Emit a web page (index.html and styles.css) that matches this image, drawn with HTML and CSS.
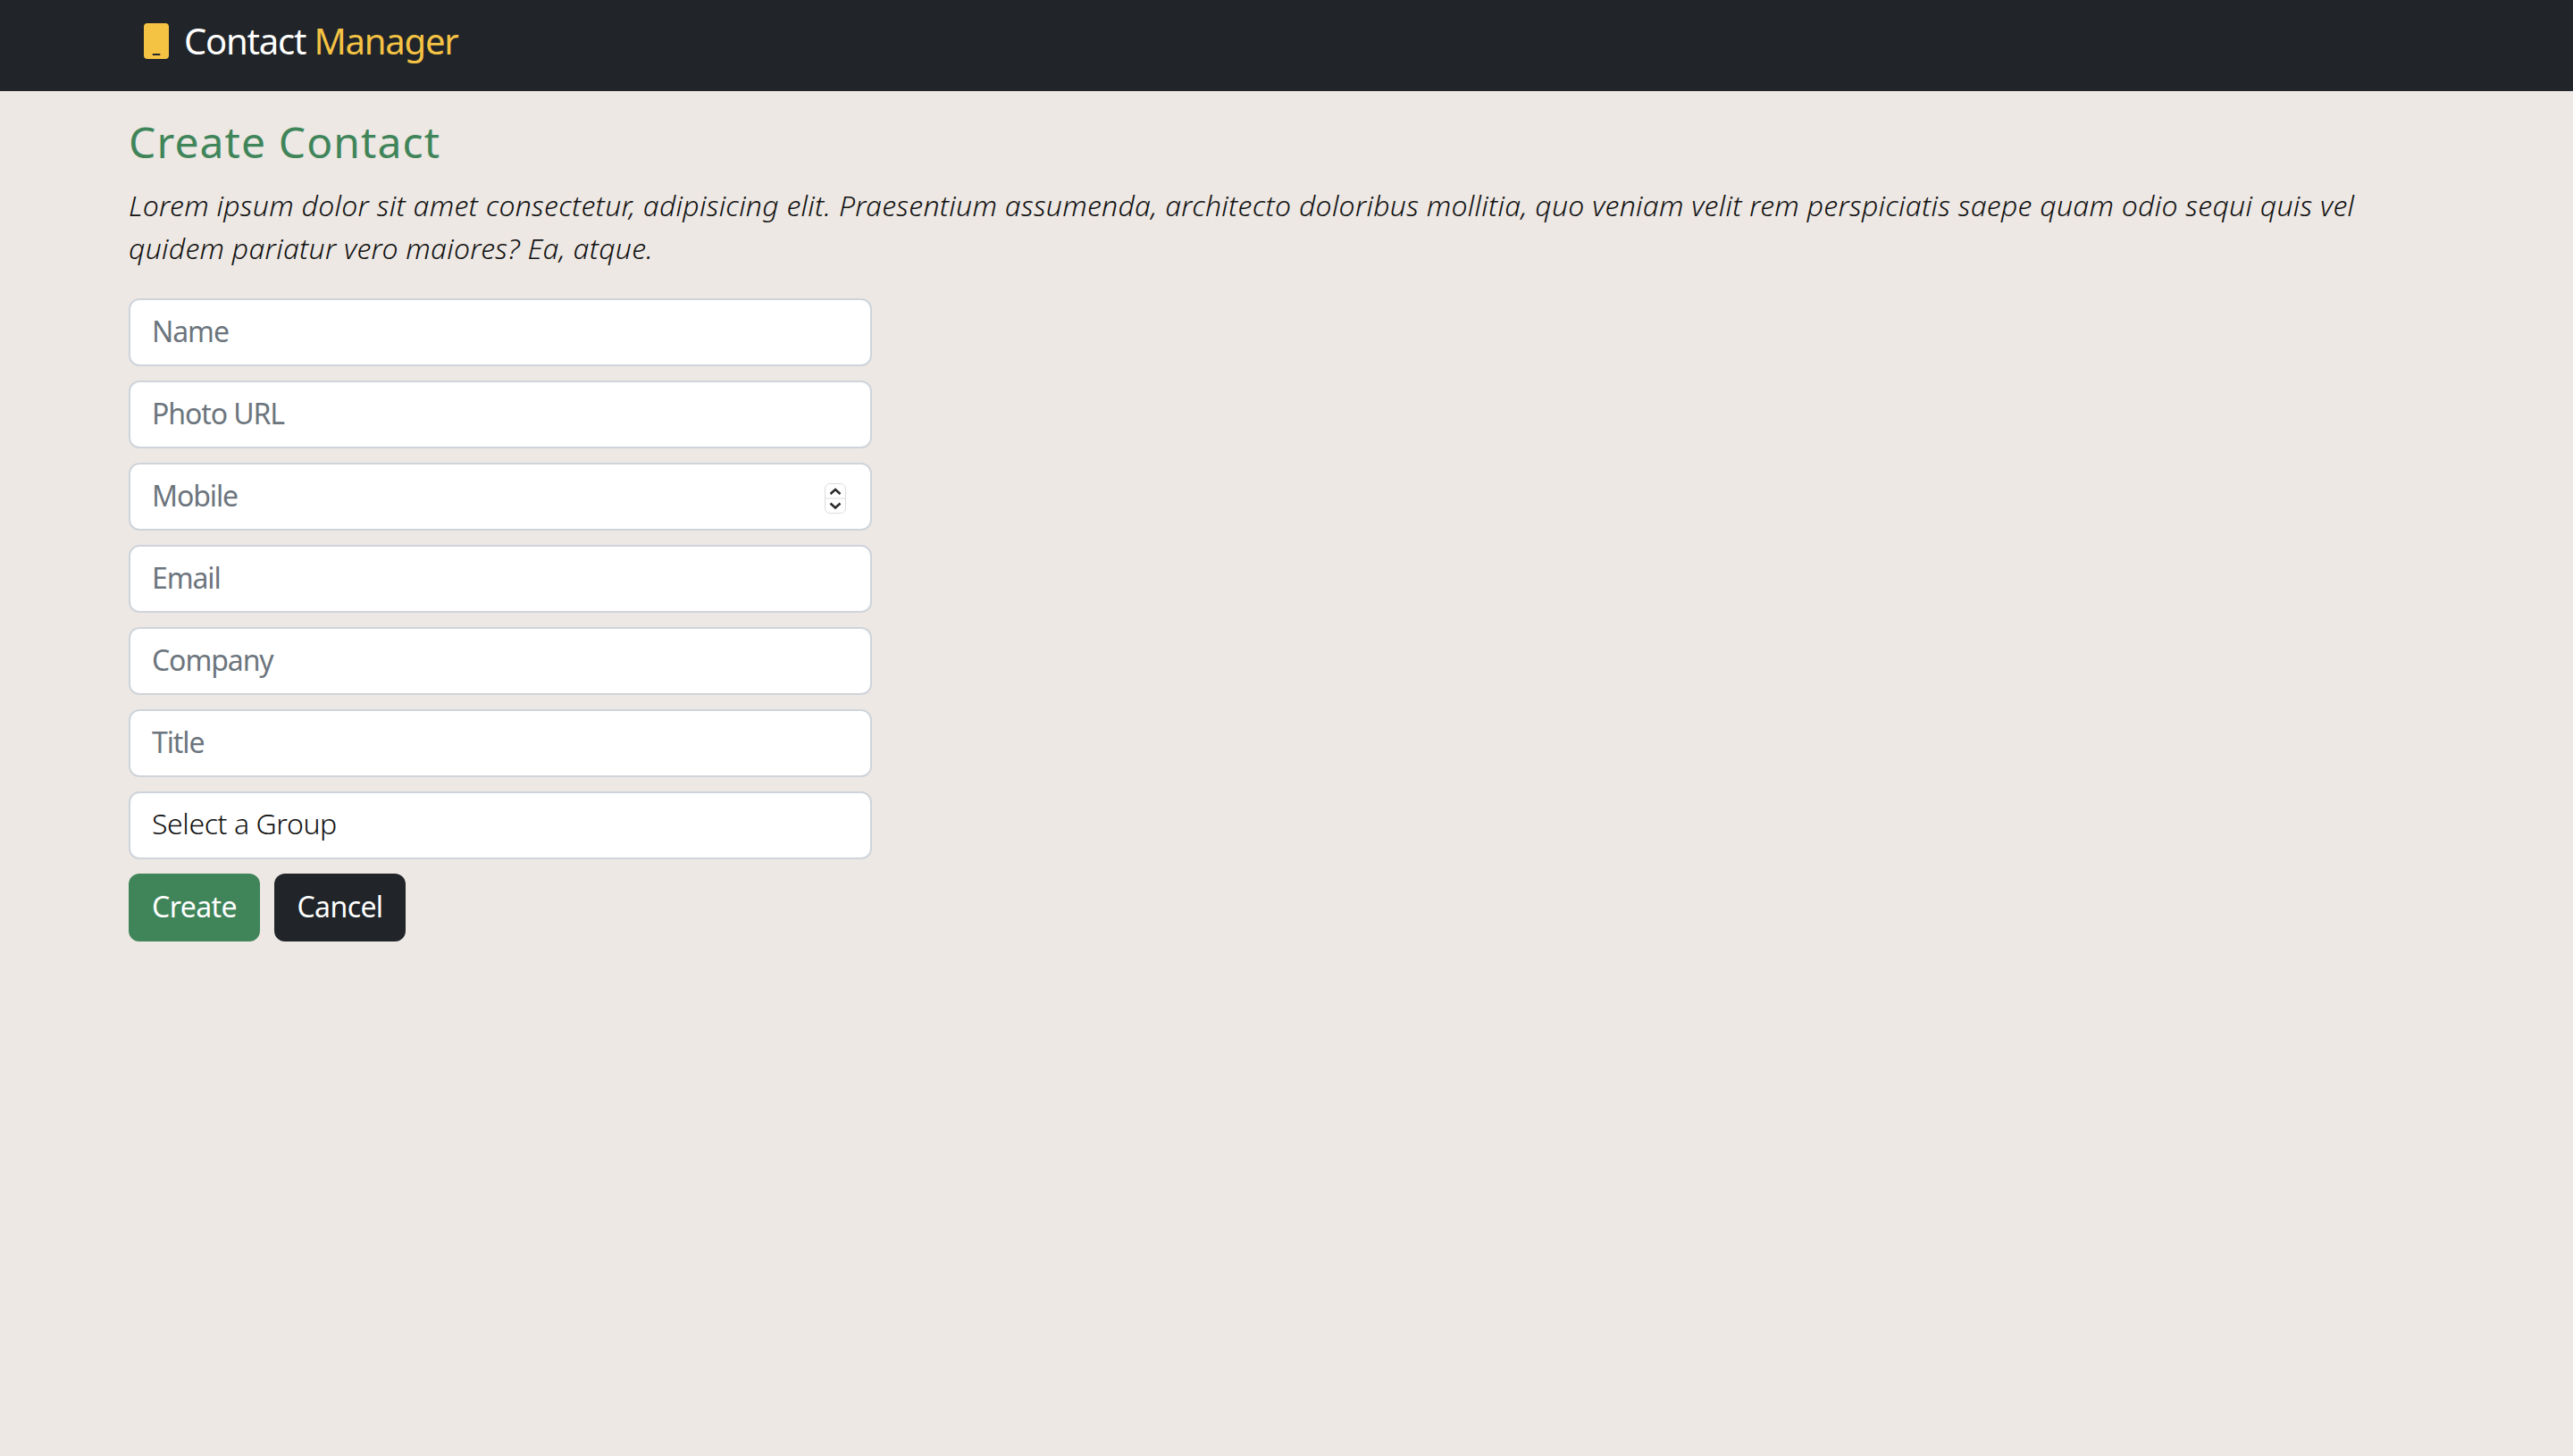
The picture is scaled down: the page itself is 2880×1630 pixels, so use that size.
FILE: index.html
```html
<!DOCTYPE html>
<html lang="en">
<head>
<meta charset="utf-8">
<title>Contact Manager</title>
<link rel="stylesheet" href="styles.css">
</head>
<body>
<nav class="navbar">
  <a class="brand" href="#">
    <svg class="brand-icon" viewBox="0 0 28 40" aria-hidden="true"><path fill-rule="evenodd" d="M4 0h20a4 4 0 0 1 4 4v32a4 4 0 0 1-4 4H4a4 4 0 0 1-4-4V4a4 4 0 0 1 4-4zM10.500 34a1 1 0 0 0 0 2h7a1 1 0 0 0 0-2z"/></svg>
    <span class="brand-text">Contact <span class="brand-accent">Manager</span></span>
  </a>
</nav>
<main class="container">
  <h1 class="title">Create Contact</h1>
  <p class="lead">Lorem ipsum dolor sit amet consectetur, adipisicing elit. Praesentium assumenda, architecto doloribus mollitia, quo veniam velit rem perspiciatis saepe quam odio sequi quis vel quidem pariatur vero maiores? Ea, atque.</p>
  <form class="form">
    <input class="field" type="text" placeholder="Name">
    <input class="field" type="text" placeholder="Photo URL">
    <div class="field-wrap">
      <input class="field" type="text" placeholder="Mobile">
      <span class="spinner" aria-hidden="true">
        <svg viewBox="0 0 24 34"><path class="spin-box" d="M6 .5h12a5.500 5.500 0 0 1 5.500 5.500v22a5.500 5.500 0 0 1-5.500 5.500H6A5.500 5.500 0 0 1 .5 28V6A5.500 5.500 0 0 1 6 .5zM0 17h24"/><path class="spin-arrow" d="M6.500 12l5.500-5 5.500 5M6.500 22.500l5.500 5 5.500-5"/></svg>
      </span>
    </div>
    <input class="field" type="text" placeholder="Email">
    <input class="field" type="text" placeholder="Company">
    <input class="field" type="text" placeholder="Title">
    <select class="field select"><option>Select a Group</option></select>
    <div class="actions">
      <button class="btn btn-create" type="button">Create</button>
      <button class="btn btn-cancel" type="button">Cancel</button>
    </div>
  </form>
</main>
</body>
</html>
```
FILE: styles.css
```css
* { box-sizing: border-box; }
html, body { margin: 0; height: 100%; }
body {
  background: #ede8e4;
  color: #212529;
  font-family: "Noto Sans", "Open Sans", sans-serif;
  font-size: 32px;
  line-height: 48px;
}
.navbar {
  height: 102px;
  background: #212529;
  padding-left: 161px;
  padding-bottom: 10px;
  display: flex;
  align-items: center;
}
.brand {
  display: flex;
  align-items: center;
  gap: 17px;
  text-decoration: none;
  color: #fff;
  font-size: 40px;
  font-weight: 400;
  letter-spacing: -1.2px;
  line-height: 60px;
}
.brand-icon { width: 28px; height: 40px; fill: #f5c344; }
.brand-accent { color: #f5c344; }
.container { padding: 28px 144px 0; }
.title {
  margin: 0 0 18px;
  font-size: 48px;
  line-height: 58px;
  font-weight: 400;
  color: #40855a;
  letter-spacing: 1.1px;
}
.lead {
  margin: 0 0 32px;
  font-style: italic;
  font-weight: 300;
  letter-spacing: 0.27px;
  color: #111;
}
.form {
  width: 832px;
  display: flex;
  flex-direction: column;
  gap: 16px;
}
.field-wrap { position: relative; }
.field {
  display: block;
  width: 100%;
  height: 76px;
  padding: 10px 24px 14px;
  border: 2px solid #ced4da;
  border-radius: 12px;
  background: #fff;
  font: 400 32px/48px "Noto Sans", "Open Sans", sans-serif;
  letter-spacing: -1.1px;
  color: #212529;
  outline: none;
}
.field::placeholder { color: #6c757d; opacity: 1; }
.select { appearance: none; font-weight: 300; letter-spacing: -0.4px; color: #111; }
.spinner {
  position: absolute;
  top: 23px;
  right: 29px;
  width: 24px;
  height: 34px;
}
.spinner svg { display: block; width: 24px; height: 34px; fill: none; }
.spin-box { stroke: #ddd; stroke-width: 1; }
.spin-arrow { stroke: #2b2b2b; stroke-width: 2.500; }
.actions { display: flex; gap: 16px; }
.btn {
  height: 76px;
  width: 147px;
  padding: 0 0 3px;
  border: 0;
  border-radius: 12px;
  color: #fff;
  font: 400 32px/48px "Noto Sans", "Open Sans", sans-serif;
  letter-spacing: -0.6px;
}
.btn-create { background: #40855a; }
.btn-cancel { background: #212529; }
```
